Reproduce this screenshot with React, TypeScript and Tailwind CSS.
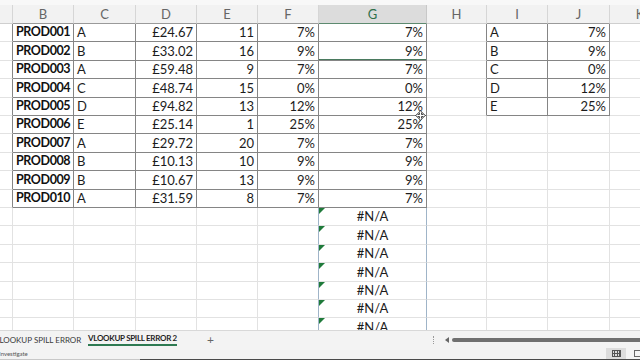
import React from "react";

const COLS = [
  { w: "w-[13px]", letter: "" },
  { w: "w-[61px]", letter: "B" },
  { w: "w-[62px]", letter: "C" },
  { w: "w-[61px]", letter: "D" },
  { w: "w-[61px]", letter: "E" },
  { w: "w-[61px]", letter: "F" },
  { w: "w-[108px]", letter: "G" },
  { w: "w-[60px]", letter: "H" },
  { w: "w-[61px]", letter: "I" },
  { w: "w-[62px]", letter: "J" },
  { w: "w-[61px]", letter: "K" },
];

const cats = ["A", "B", "A", "C", "D", "E", "A", "B", "B", "A"];
const prices = ["£24.67", "£33.02", "£59.48", "£48.74", "£94.82", "£25.14", "£29.72", "£10.13", "£10.67", "£31.59"];
const qty = ["11", "16", "9", "15", "13", "1", "20", "10", "13", "8"];
const pct = ["7%", "9%", "7%", "0%", "12%", "25%", "7%", "9%", "9%", "7%"];
const lookI = ["A", "B", "C", "D", "E"];
const lookJ = ["7%", "9%", "0%", "12%", "25%"];

const NROWS = 17;

function inTable(r: number, c: number) {
  if (r < 0) return false;
  if (r < 10 && c >= 1 && c <= 6) return true;
  if (r < 5 && (c === 8 || c === 9)) return true;
  return false;
}

function content(r: number, c: number): { t: string; align: string; bold?: boolean } | null {
  if (r < 10) {
    if (c === 1) return { t: `PROD${String(r + 1).padStart(3, "0")}`, align: "justify-start", bold: true };
    if (c === 2) return { t: cats[r], align: "justify-start" };
    if (c === 3) return { t: prices[r], align: "justify-end" };
    if (c === 4) return { t: qty[r], align: "justify-end" };
    if (c === 5) return { t: pct[r], align: "justify-end" };
    if (c === 6) return { t: pct[r], align: "justify-end" };
  } else if (c === 6) {
    return { t: "#N/A", align: "justify-center" };
  }
  if (r < 5) {
    if (c === 8) return { t: lookI[r], align: "justify-start" };
    if (c === 9) return { t: lookJ[r], align: "justify-end" };
  }
  return null;
}

function Cell({ r, c }: { r: number; c: number }) {
  const col = COLS[c];
  const spill = r >= 10 && (c === 5 || c === 6);
  const rightDark = inTable(r, c) || inTable(r, c + 1);
  const bottomDark = inTable(r, c) || inTable(r + 1, c);
  const rc = spill ? "border-r-[#9fb4c8]" : rightDark ? "border-r-[#858585]" : "border-r-[#e2e2e2]";
  const bc = bottomDark ? "border-b-[#858585]" : "border-b-[#e2e2e2]";
  const v = content(r, c);
  return (
    <div className={`relative shrink-0 h-full flex items-center px-[3px] border-r border-b overflow-hidden whitespace-nowrap ${col.w} ${rc} ${bc} ${v ? v.align : ""}`}>
      {v && (
        <span className={v.bold ? "font-bold text-[12.5px] tracking-[-0.4px] text-[#111]" : "text-[#1c1c1c]"}>{v.t}</span>
      )}
      {r >= 10 && c === 6 && (
        <div className="absolute left-0 top-0 w-0 h-0 border-t-[6px] border-r-[6px] border-t-[#1f7a3a] border-r-transparent" />
      )}
      {r === 1 && c === 6 && (
        <div className="absolute left-[-1px] top-[-1px] right-[-1px] bottom-[-1px] border border-b-2 border-[#4a7a5e]" />
      )}
    </div>
  );
}

export default function App() {
  return (
    <div
      className="w-[640px] h-[360px] overflow-hidden bg-white flex flex-col text-[13px] leading-none"
      style={{ fontFamily: "Lato, 'Open Sans', sans-serif" }}
    >
      {/* top strip */}
      <div className="h-[5px] shrink-0 bg-[#f8f8f8]" />
      {/* header row */}
      <div className="h-[19px] shrink-0 flex bg-[#f2f2f2]">
        {COLS.map((col, c) => {
          const sel = c === 6;
          const dark = (c >= 1 && c <= 6) || c === 8 || c === 9;
          return (
            <div
              key={c}
              className={`shrink-0 h-full flex items-center justify-center border-r border-b ${col.w} ${
                sel
                  ? "bg-[#dcdcdc] text-[#2f6f4a] border-r-[#c8c8c8] border-b-[#5d8a6f]"
                  : dark
                  ? "text-[#666] border-r-[#d6d6d6] border-b-[#9a9a9a]"
                  : "text-[#666] border-r-[#d6d6d6] border-b-[#cfcfcf]"
              }`}
            >
              {col.letter}
            </div>
          );
        })}
      </div>
      {/* grid body */}
      <div className="relative flex-1 overflow-hidden flex flex-col">
        {Array.from({ length: NROWS }).map((_, r) => (
          <div key={r} className={`shrink-0 flex ${r % 5 === 1 || r % 5 === 3 ? "h-[19px]" : "h-[18px]"}`}>
            {COLS.map((_, c) => (
              <Cell key={c} r={r} c={c} />
            ))}
          </div>
        ))}
        {/* cursor */}
        <svg className="absolute left-[415px] top-[86px]" width="11" height="11" viewBox="0 0 11 11">
          <path d="M5.5 0.5 L7.5 3 L6.5 3 L6.5 4.5 L8 4.5 L8 3.5 L10.5 5.5 L8 7.5 L8 6.5 L6.5 6.5 L6.5 8 L7.5 8 L5.5 10.5 L3.5 8 L4.5 8 L4.5 6.5 L3 6.5 L3 7.5 L0.5 5.5 L3 3.5 L3 4.5 L4.5 4.5 L4.5 3 L3.5 3 Z" fill="white" stroke="#222" strokeWidth="0.8" />
        </svg>
      </div>
      {/* tab bar */}
      <div className="h-[18px] shrink-0 flex items-center bg-[#f3f3f3] border-t border-[#d8d8d8] text-[8px] text-[#3a3a3a]">
        <div className="w-[433px] shrink-0 h-full flex items-center">
          <div className="ml-[-6px] w-[85px] h-full flex items-center whitespace-nowrap">VLOOKUP SPILL ERROR</div>
          <div className="ml-[9px] h-full flex flex-col items-center justify-center">
            <span className="font-bold tracking-[-0.3px] text-[#1f1f1f] whitespace-nowrap">VLOOKUP SPILL ERROR 2</span>
            <div className="mt-[2px] h-[2px] w-full bg-[#2e7a52]" />
          </div>
          <span className="ml-[30px] text-[12px] text-[#666]">+</span>
        </div>
        <div className="flex items-center h-full flex-1">
          <div className="w-[1px] h-[8px] border-l border-dotted border-[#999]" />
          <div className="ml-[11px] w-0 h-0 border-y-[3px] border-y-transparent border-r-[4px] border-r-[#666]" />
          <div className="ml-[3px] flex-1 h-[4px] rounded-l-full bg-[#707070]" />
        </div>
      </div>
      {/* status bar */}
      <div className="h-[11px] shrink-0 flex items-center bg-[#f3f3f3] text-[6px] text-[#555]">
        <span className="ml-[-1px]">Investigate</span>
        <div className="flex-1" />
        <div className="w-[20px] h-full bg-[#dcdcdc] flex items-center justify-center mr-[8px]">
          <div className="w-[9px] h-[7px] grid grid-cols-3 gap-[1px] bg-[#555] p-[1px]">
            {Array.from({ length: 6 }).map((_, i) => (
              <div key={i} className="bg-[#dcdcdc]" />
            ))}
          </div>
        </div>
        <div className="w-[10px] h-[7px] border border-[#666] mr-[-4px]" />
      </div>
      <div className="h-[1px] shrink-0 flex">
        <div className="w-[140px] bg-[#c8c8c8]" />
        <div className="flex-1 bg-[#4a4a4a]" />
      </div>
    </div>
  );
}
